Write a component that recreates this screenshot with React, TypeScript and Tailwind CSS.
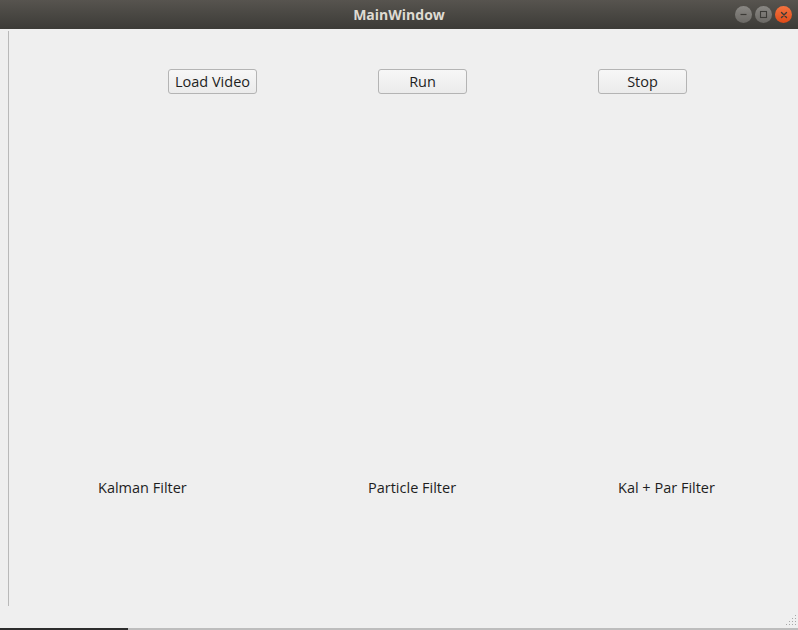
const font = { fontFamily: '"Open Sans", "Noto Sans", "DejaVu Sans", sans-serif' };

const QtButton = ({ label }: { label: string }) => (
  <button className="flex h-[25px] w-[89px] items-center justify-center rounded-[3px] border border-[#b4b4b4] bg-gradient-to-b from-[#f7f7f7] to-[#ebebeb] text-[14.5px] text-[#1e1e1e]">
    {label}
  </button>
);

const TitleButton = ({ kind }: { kind: 'min' | 'max' | 'close' }) => {
  if (kind === 'close') {
    return (
      <div className="flex h-[17px] w-[17px] items-center justify-center rounded-full bg-gradient-to-b from-[#f3733f] to-[#df4a16]">
        <svg width="8" height="8" viewBox="0 0 8 8">
          <path d="M1.5 1.5 L6.5 6.5 M6.5 1.5 L1.5 6.5" stroke="#3c3b37" strokeWidth="1.4" strokeLinecap="round" />
        </svg>
      </div>
    );
  }
  return (
    <div className="flex h-[17px] w-[17px] items-center justify-center rounded-full bg-gradient-to-b from-[#8a8884] to-[#6b6965]">
      <svg width="9" height="9" viewBox="0 0 9 9">
        {kind === 'min' ? (
          <path d="M1.5 4.5 H7.5" stroke="#3c3b37" strokeWidth="1.2" />
        ) : (
          <rect x="1.5" y="1.5" width="6" height="6" fill="none" stroke="#3c3b37" strokeWidth="1.1" />
        )}
      </svg>
    </div>
  );
};

const ResizeGrip = () => (
  <svg width="12" height="12" viewBox="0 0 12 12" className="absolute right-[1px] bottom-[2px]">
    {[
      [10, 2],
      [7, 5],
      [10, 5],
      [4, 8],
      [7, 8],
      [10, 8],
      [1, 11],
      [4, 11],
      [7, 11],
      [10, 11],
    ].map(([x, y]) => (
      <rect key={`${x}-${y}`} x={x} y={y - 1} width="1" height="1" fill="#a8a8a8" />
    ))}
  </svg>
);

const App = () => {
  return (
    <div className="flex h-[630px] w-[798px] flex-col overflow-hidden bg-[#efefef]" style={font}>
      {/* title bar */}
      <div className="relative flex h-[29px] shrink-0 items-center justify-center bg-gradient-to-b from-[#57544f] to-[#3c3b37]">
        <span className="text-[14px] font-bold text-[#dfdbd2]">MainWindow</span>
        <div className="absolute top-[6px] right-[6px] flex gap-[3px]">
          <TitleButton kind="min" />
          <TitleButton kind="max" />
          <TitleButton kind="close" />
        </div>
      </div>

      {/* body */}
      <div className="relative flex flex-1 flex-row">
        <div className="mt-[2px] ml-[8px] h-[575px] w-px bg-[#b9b9b9]" />
        <div className="flex flex-1 flex-col">
          <div className="mt-[40px] flex flex-row pl-[159px]">
            <QtButton label="Load Video" />
            <div className="w-[121px]" />
            <QtButton label="Run" />
            <div className="w-[131px]" />
            <QtButton label="Stop" />
          </div>
          <div className="mt-[383px] flex flex-row text-[14.5px] text-[#1e1e1e]">
            <span className="ml-[89px] w-[270px]">Kalman Filter</span>
            <span className="w-[250px]">Particle Filter</span>
            <span>Kal + Par Filter</span>
          </div>
        </div>
        <ResizeGrip />
      </div>

      {/* bottom edge */}
      <div className="flex h-[2px] shrink-0 flex-row">
        <div className="w-[128px] bg-[#2d2d2d]" />
        <div className="flex-1 bg-[#bdbdbd]" />
      </div>
    </div>
  );
};

export default App;
